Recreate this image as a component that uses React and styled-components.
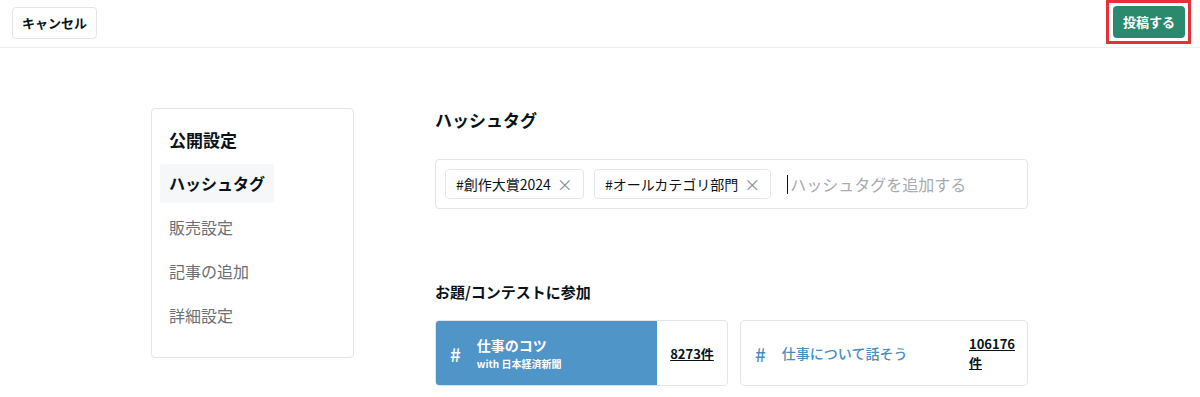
import { createGlobalStyle, styled } from "styled-components";

const Global = createGlobalStyle`
  body {
    margin: 0;
    background: #fff;
    font-family: "Noto Sans CJK JP", "Noto Sans", sans-serif;
    color: #08131a;
  }
`;

const Header = styled.header`
  height: 47px;
  border-bottom: 1px solid #eceeef;
  display: flex;
  align-items: center;
  justify-content: space-between;
  padding: 0 12px;
`;

const CancelButton = styled.button`
  height: 32px;
  padding: 0 9px;
  border: 1px solid #e3e6e8;
  border-radius: 4px;
  background: #fff;
  font-family: inherit;
  font-size: 13px;
  font-weight: 700;
  color: #08131a;
  margin-top: -2px;
`;

const PostButton = styled.button`
  position: relative;
  height: 32px;
  width: 72px;
  padding: 0;
  border: none;
  border-radius: 4px;
  background: #2b8a6e;
  color: #fff;
  font-family: inherit;
  font-size: 13px;
  font-weight: 700;
  margin-right: 3px;
  margin-top: -4px;

  &::after {
    content: "";
    position: absolute;
    inset: -6px -6px -6px -7px;
    border: 3px solid #e5303a;
  }
`;

const Layout = styled.div`
  display: flex;
  align-items: flex-start;
  gap: 81px;
  padding: 60px 0 0 151px;
`;

const Sidebar = styled.nav`
  width: 203px;
  height: 250px;
  border: 1px solid #e3e6e8;
  border-radius: 4px;
  padding: 16px 8px 0;
  box-sizing: border-box;
  flex-shrink: 0;
`;

const SideTitle = styled.div`
  font-size: 17px;
  font-weight: 700;
  padding: 0 9px;
  line-height: 30px;
  margin-bottom: 9px;
`;

const SideList = styled.div`
  display: flex;
  flex-direction: column;
  align-items: flex-start;
`;

const SideItem = styled.div`
  font-size: 16px;
  line-height: 39px;
  height: 39px;
  padding: 0 9px;
  margin-bottom: 5px;
  border-radius: 3px;
  font-weight: ${(p) => (p.$active ? 700 : 400)};
  color: ${(p) => (p.$active ? "#08131a" : "#6b7075")};
  background: ${(p) => (p.$active ? "#f5f7f8" : "transparent")};
`;

const Main = styled.main`
  width: 593px;
`;

const Heading = styled.h2`
  margin: 0;
  font-size: 17px;
  font-weight: 700;
  line-height: 24px;
`;

const TagBox = styled.div`
  margin-top: 27px;
  height: 50px;
  border: 1px solid #e3e6e8;
  border-radius: 4px;
  box-sizing: border-box;
  display: flex;
  align-items: center;
  gap: 10px;
  padding: 0 9px;
`;

const Chip = styled.span`
  display: inline-flex;
  align-items: center;
  gap: 6px;
  height: 30px;
  padding: 0 10px;
  border: 1px solid #e3e6e8;
  border-radius: 4px;
  box-sizing: border-box;
  font-size: 14px;
  color: #08131a;
`;

const Close = styled.span`
  color: #8a8f94;
  font-size: 16px;
`;

const TagInput = styled.div`
  margin-left: 6px;
  display: flex;
  align-items: center;
  font-size: 16px;
  color: #a7abaf;
`;

const Caret = styled.span`
  width: 1px;
  height: 19px;
  background: #08131a;
  margin-right: 2px;
`;

const SubHeading = styled.h3`
  margin: 71px 0 0;
  font-size: 15px;
  font-weight: 700;
  line-height: 24px;
`;

const Cards = styled.div`
  margin-top: 16px;
  display: grid;
  grid-template-columns: 293px 1fr;
  gap: 12px;
`;

const Card = styled.div`
  height: 66px;
  border: 1px solid #e3e6e8;
  border-radius: 4px;
  box-sizing: border-box;
  display: flex;
  overflow: hidden;
`;

const CardMain = styled.div`
  box-sizing: border-box;
  flex: ${(p) => (p.$selected ? "0 0 221px" : "1")};
  background: ${(p) => (p.$selected ? "#5095c8" : "transparent")};
  color: ${(p) => (p.$selected ? "#fff" : "#4a8dc2")};
  display: flex;
  align-items: center;
  padding-left: 14px;
  gap: 16px;
`;

const Hash = styled.span`
  font-size: 19px;
  font-weight: 500;
`;

const CardTitle = styled.div`
  font-size: 14px;
  font-weight: ${(p) => (p.$selected ? 700 : 500)};
`;

const CardSub = styled.div`
  font-size: 10px;
  font-weight: 700;
  margin-top: 1px;
`;

const Count = styled.div`
  flex: ${(p) => (p.$wrap ? "0 0 46px" : "1")};
  display: flex;
  align-items: center;
  justify-content: center;
  padding-right: ${(p) => (p.$wrap ? "12px" : "0")};
  font-size: 13px;
  font-weight: 700;
  line-height: 19px;
  text-decoration: underline;
  color: #08131a;
`;

export default function App() {
  return (
    <>
      <Global />
      <Header>
        <CancelButton>キャンセル</CancelButton>
        <PostButton>投稿する</PostButton>
      </Header>
      <Layout>
        <Sidebar>
          <SideTitle>公開設定</SideTitle>
          <SideList>
            <SideItem $active>ハッシュタグ</SideItem>
            <SideItem>販売設定</SideItem>
            <SideItem>記事の追加</SideItem>
            <SideItem>詳細設定</SideItem>
          </SideList>
        </Sidebar>
        <Main>
          <Heading>ハッシュタグ</Heading>
          <TagBox>
            <Chip>
              #創作大賞2024 <Close>×</Close>
            </Chip>
            <Chip>
              #オールカテゴリ部門 <Close>×</Close>
            </Chip>
            <TagInput>
              <Caret />
              ハッシュタグを追加する
            </TagInput>
          </TagBox>
          <SubHeading>お題/コンテストに参加</SubHeading>
          <Cards>
            <Card>
              <CardMain $selected>
                <Hash>#</Hash>
                <div>
                  <CardTitle $selected>仕事のコツ</CardTitle>
                  <CardSub>with 日本経済新聞</CardSub>
                </div>
              </CardMain>
              <Count>8273件</Count>
            </Card>
            <Card>
              <CardMain>
                <Hash>#</Hash>
                <CardTitle>仕事について話そう</CardTitle>
              </CardMain>
              <Count $wrap>106176件</Count>
            </Card>
          </Cards>
        </Main>
      </Layout>
    </>
  );
}
